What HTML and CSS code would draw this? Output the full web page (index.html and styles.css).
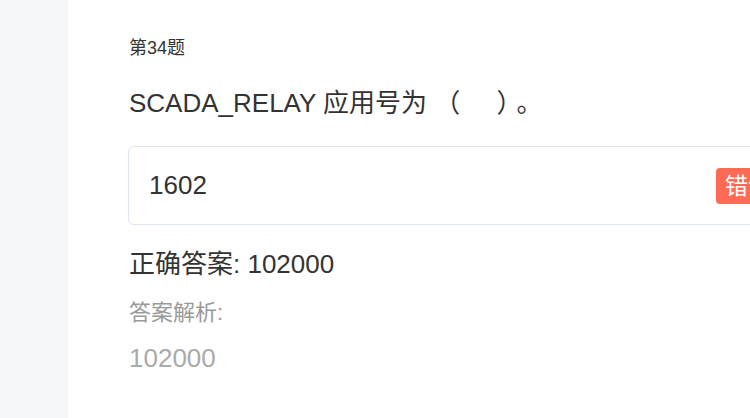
FILE: index.html
```html
<!DOCTYPE html>
<html lang="zh">
<head>
<meta charset="utf-8">
<link rel="stylesheet" href="styles.css">
</head>
<body>
<div class="layout">
  <aside class="sidebar"></aside>
  <main class="main">
    <div class="q-num">第34题</div>
    <div class="q-title">SCADA_RELAY 应用号为 （&nbsp;&nbsp;&nbsp;&nbsp;&nbsp;<span class="close-paren">）</span>。</div>
    <div class="answer-box">
      <span class="answer-text">1602</span>
      <span class="badge">错误</span>
    </div>
    <div class="correct">正确答案: 102000</div>
    <div class="analysis-label">答案解析:</div>
    <div class="analysis-text">102000</div>
  </main>
</div>
</body>
</html>
```

FILE: styles.css
```css
html, body {
  margin: 0;
  padding: 0;
  width: 750px;
  height: 418px;
  overflow: hidden;
  font-family: "Liberation Sans", Arial, "Noto Sans CJK SC", sans-serif;
}
.layout {
  display: flex;
  height: 418px;
}
.sidebar {
  width: 68px;
  flex: none;
  background: #f5f7fa;
}
.main {
  flex: 1;
  min-width: 0;
  background: #fff;
  padding: 35px 0 0 61px;
  display: flex;
  flex-direction: column;
  overflow: hidden;
}
.q-num {
  font-size: 18px;
  line-height: 26px;
  color: #333;
}
.q-title {
  margin-top: 25px;
  font-size: 26px;
  line-height: 34px;
  color: #333;
  white-space: nowrap;
}
.close-paren {
  margin-right: 7px;
}
.answer-box {
  margin-top: 26px;
  margin-left: -1px;
  width: 700px;
  flex: none;
  height: 77px;
  border: 1px solid #dde5ee;
  border-radius: 6px;
  display: flex;
  align-items: center;
  padding-left: 20px;
  box-sizing: content-box;
}
.answer-text {
  font-size: 26px;
  color: #333;
  width: 567px;
  flex: none;
}
.badge {
  flex: none;
  background: #ff6a55;
  color: #fff;
  font-size: 23px;
  line-height: 36px;
  padding: 0 9px;
  border-radius: 4px;
  white-space: nowrap;
}
.correct {
  margin-top: 22px;
  font-size: 26px;
  line-height: 34px;
  color: #333;
}
.analysis-label {
  margin-top: 17px;
  font-size: 22px;
  line-height: 30px;
  color: #999;
}
.analysis-text {
  margin-top: 13px;
  font-size: 26px;
  line-height: 34px;
  color: #aaa;
}
```
